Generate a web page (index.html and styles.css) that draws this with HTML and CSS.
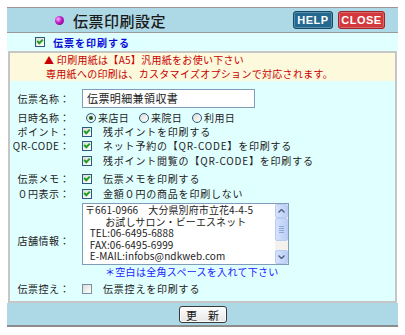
FILE: index.html
```html
<!DOCTYPE html>
<html lang="ja">
<head>
    <meta charset="UTF-8">
    <title>伝票印刷設定</title>
    <link rel="stylesheet" href="styles.css">
</head>
<body>
    <div class="window">
        <!-- title bar -->
        <div class="head">
            <span class="bullet"></span>
            <h1 class="title">伝票印刷設定</h1>
            <div class="head-buttons">
                <button class="btn btn-help">HELP</button>
                <button class="btn btn-close">CLOSE</button>
            </div>
        </div>

        <div class="toggle">
            <span class="check on"></span>
            <span class="toggle-text">伝票を印刷する</span>
        </div>

        <div class="box">
            <div class="notice">
                <p class="notice-line">▲ 印刷用紙は【A5】汎用紙をお使い下さい</p>
                <p class="notice-line sub">専用紙への印刷は、カスタマイズオプションで対応されます。</p>
            </div>

            <div class="form">
                <div class="row row-name">
                    <span class="label">伝票名称：</span>
                    <span class="value"><input class="text" type="text" value="伝票明細兼領収書"></span>
                </div>
                <div class="row">
                    <span class="label">日時名称：</span>
                    <span class="value radios">
                        <span class="opt"><span class="radio on"></span>来店日</span>
                        <span class="opt"><span class="radio"></span>来院日</span>
                        <span class="opt"><span class="radio"></span>利用日</span>
                    </span>
                </div>
                <div class="row">
                    <span class="label">ポイント：</span>
                    <span class="value"><span class="check on"></span>残ポイントを印刷する</span>
                </div>
                <div class="row row-tall">
                    <span class="label">QR-CODE：</span>
                    <span class="value"><span class="check on"></span>ネット予約の【QR-CODE】を印刷する</span>
                </div>
                <div class="row row-tall">
                    <span class="label"></span>
                    <span class="value"><span class="check on"></span>残ポイント閲覧の【QR-CODE】を印刷する</span>
                </div>
                <div class="row row-memo">
                    <span class="label">伝票メモ：</span>
                    <span class="value"><span class="check on"></span>伝票メモを印刷する</span>
                </div>
                <div class="row">
                    <span class="label">０円表示：</span>
                    <span class="value"><span class="check on"></span>金額０円の商品を印刷しない</span>
                </div>
                <div class="row row-shop">
                    <span class="label">店舗情報：</span>
                    <div class="shop">
                        <div class="textbox">
                            <div class="textbox-text">〒661-0966　大分県別府市立花4-4-5
　　お試しサロン・ビーエスネット
  TEL:06-6495-6888
  FAX:06-6495-6999
  E-MAIL:infobs@ndkweb.com</div>
                            <div class="scrollbar">
                                <span class="sb-btn">
                                    <svg width="7" height="4" viewBox="0 0 7 4"><path d="M0.5 3.5 L3.5 0.5 L6.5 3.5" fill="none" stroke="#4d6185" stroke-width="1.4"/></svg>
                                </span>
                                <span class="sb-thumb"><i></i><i></i><i></i><i></i></span>
                                <span class="sb-track"></span>
                                <span class="sb-btn">
                                    <svg width="7" height="4" viewBox="0 0 7 4"><path d="M0.5 0.5 L3.5 3.5 L6.5 0.5" fill="none" stroke="#4d6185" stroke-width="1.4"/></svg>
                                </span>
                            </div>
                        </div>
                        <p class="note">＊空白は全角スペースを入れて下さい</p>
                    </div>
                </div>
                <div class="row row-last">
                    <span class="label">伝票控え：</span>
                    <span class="value"><span class="check"></span>伝票控えを印刷する</span>
                </div>
            </div>
        </div>

        <div class="foot">
            <button class="update">更　新</button>
        </div>
    </div>
</body>
</html>
```

FILE: styles.css
```css
/* Print settings dialog: light blue bars, cyan form, cream notice */
body {
    margin: 0;
    background: white;
    font-family: "Noto Sans CJK JP", sans-serif;
    font-size: 10px;
    color: #222;
    text-spacing-trim: space-all; /* keep the full width of 【】 */
}
.window {
    width: 391px;
    margin: 7px 0 0 7px;
}

/* title bar */
.head {
    display: flex;
    align-items: center;
    height: 24px;
    padding-left: 48px;
    padding-right: 13px;
    background: #add8e6;
    border-top: 1px solid #a39494;
    border-bottom: 1px solid #9a9a9a;
}
.bullet {
    width: 9px;
    height: 9px;
    border-radius: 50%;
    background: radial-gradient(circle at 35% 35%, #f6b8f6 0, #c018c8 45%, #5a0866 100%);
    margin-right: 9px;
}
.title {
    margin: 0;
    font-size: 15px;
    font-weight: 500;
    color: #1a1a1a;
    letter-spacing: 0.5px;
}
.head-buttons {
    margin-left: auto;
    display: flex;
    gap: 5px;
}
.btn {
    height: 18px;
    padding: 0;
    border-radius: 3px;
    color: white;
    font-family: "Liberation Sans", Arial, sans-serif;
    font-size: 11px;
    font-weight: bold;
    letter-spacing: 0.5px;
    box-shadow: inset 0 0 0 1px rgba(255, 255, 255, 0.25);
}
.btn-help {
    width: 40px;
    background: #24698f;
    border: 1px solid #174a68;
}
.btn-close {
    width: 47px;
    background: #d2383c;
    border: 1px solid #9e2226;
}

/* checkboxes and radios */
.check {
    position: relative;
    display: inline-block;
    flex: none;
    width: 8px;
    height: 8px;
    border: 1px solid #2a5a7e;
    background: linear-gradient(135deg, #dcdcd4, #ffffff);
}
.check.on::after {
    content: "";
    position: absolute;
    left: 1px;
    top: 1px;
    width: 4px;
    height: 2px;
    border-left: 2px solid #22a022;
    border-bottom: 2px solid #22a022;
    transform: rotate(-45deg);
}
.check:not(.on) {
    border-color: #7a8ea8;
}
.radio {
    position: relative;
    display: inline-block;
    flex: none;
    width: 8px;
    height: 8px;
    border: 1px solid #2a5a7e;
    border-radius: 50%;
    background: linear-gradient(135deg, #dcdcd4, #ffffff);
    margin-right: 2px;
}
.radio.on::after {
    content: "";
    position: absolute;
    left: 2px;
    top: 2px;
    width: 4px;
    height: 4px;
    border-radius: 50%;
    background: #1e5a1e;
}

.toggle {
    display: flex;
    align-items: center;
    gap: 8px;
    height: 18px;
    padding-left: 28px;
    background: #e0ffff;
}
.toggle-text {
    color: #0a0ad8;
    font-weight: bold;
    letter-spacing: 1px;
}

/* bordered panel */
.box {
    margin: 0 1px;
    border: 2px solid #c6c6c6;
}
.notice {
    background: #fdf9dc;
    padding-left: 34px;
}
.notice-line {
    margin: 0;
    line-height: 14px;
    color: #c80000;
    letter-spacing: 0.3px;
}
.notice-line.sub {
    padding-left: 2px;
}

.form {
    background: #e0ffff;
    padding: 5px 0 6px;
}
.row {
    display: grid;
    grid-template-columns: 60px 1fr;
    column-gap: 12px;
    align-items: center;
    height: 14px;
}
.row-name {
    height: 24px;
}
.row-tall {
    height: 15px;
}
.row-memo {
    height: 15px;
    margin-top: 3px;
}
.row-shop {
    height: 80px;
}
.row-last {
    margin-top: 1px;
}
.label {
    text-align: right;
    letter-spacing: 0.5px;
    white-space: nowrap;
}
.value {
    display: flex;
    align-items: center;
    gap: 11px;
    letter-spacing: 0.8px;
    white-space: nowrap;
}
.radios {
    gap: 0;
    padding-left: 4px;
    letter-spacing: 0.4px;
}
.opt {
    display: flex;
    align-items: center;
    width: 53px;
}
.text {
    width: 173px;
    height: 19px;
    box-sizing: border-box;
    border: 1px solid #7f9db9;
    padding: 0 4px;
    font-family: "Noto Sans CJK JP", sans-serif;
    font-size: 11px;
    letter-spacing: 0.4px;
    color: #222;
    background: white;
}

/* shop info text area */
.shop {
    align-self: start;
    padding-top: 3px;
}
.textbox {
    display: flex;
    width: 207px;
    height: 62px;
    box-sizing: border-box;
    border: 1px solid #7f9db9;
    background: white;
}
.textbox-text {
    flex: 1;
    padding: 0 2px;
    white-space: pre;
    line-height: 11.6px;
    font-size: 10px;
    letter-spacing: 0.1px;
}
.scrollbar {
    display: flex;
    flex-direction: column;
    flex: none;
    width: 13px;
    background: #f4f2ec;
}
.sb-btn {
    display: flex;
    align-items: center;
    justify-content: center;
    height: 12px;
    border: 1px solid #b8cdf4;
    border-radius: 2px;
    background: linear-gradient(90deg, #d6e2fc, #bccff6);
}
.sb-thumb {
    display: flex;
    flex-direction: column;
    align-items: center;
    justify-content: center;
    gap: 1px;
    height: 21px;
    border: 1px solid #b8cdf4;
    border-radius: 2px;
    background: linear-gradient(90deg, #d6e2fc, #bccff6);
}
.sb-thumb i {
    width: 5px;
    height: 1px;
    background: #8ea8dc;
}
.sb-track {
    flex: 1;
}
.note {
    margin: 0;
    padding-left: 23px;
    line-height: 14px;
    color: #1a1aff;
    letter-spacing: 0.3px;
}

/* footer */
.foot {
    display: flex;
    justify-content: center;
    align-items: center;
    height: 22px;
    background: #add8e6;
    border-bottom: 2px solid #8c8c8c;
}
.update {
    width: 48px;
    height: 17px;
    padding: 0;
    border: 1px solid #3a3a3a;
    border-radius: 3px;
    background: linear-gradient(#ffffff, #e6e6e6);
    box-shadow: inset 0 0 0 1px #ffffff;
    font-family: "Noto Sans CJK JP", sans-serif;
    font-size: 11px;
    color: #111;
}
```
